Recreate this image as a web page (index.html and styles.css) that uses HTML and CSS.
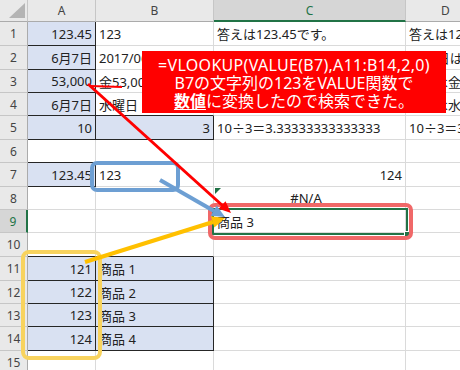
FILE: index.html
```html
<!DOCTYPE html>
<html lang="ja">
<head>
<meta charset="utf-8">
<title>VLOOKUP VALUE</title>
<link rel="stylesheet" href="styles.css">
</head>
<body>
<div class="sheet">
  <div class="grid">
    <div class="corner"><svg width="28" height="22" viewBox="0 0 28 22"><polygon points="9,18 25,18 25,3" fill="#b4b4b4"/></svg></div>
    <div class="ch">A</div><div class="ch">B</div><div class="ch on">C</div><div class="ch">D</div>

    <div class="rh">1</div><div class="c bx r">123.45</div><div class="c">123</div><div class="c">答えは123.45です。</div><div class="c">答えは123です。</div>
    <div class="rh">2</div><div class="c bx r">6月7日</div><div class="c">2017/06/07</div><div class="c"></div><div class="c">6月7日は</div>
    <div class="rh">3</div><div class="c bx r">53,000</div><div class="c">金53,000円</div><div class="c"></div><div class="c">答えは金53,000円</div>
    <div class="rh">4</div><div class="c bx r">6月7日</div><div class="c bb">水曜日</div><div class="c"></div><div class="c">答えは水曜日</div>
    <div class="rh">5</div><div class="c bx r">10</div><div class="c bx r">3</div><div class="c">10<span class="cjk">÷</span>3＝3.33333333333333</div><div class="c">10<span class="cjk">÷</span>3＝3.33333333333333</div>
    <div class="rh">6</div><div class="c bb"></div><div class="c"></div><div class="c"></div><div class="c"></div>
    <div class="rh">7</div><div class="c bx r">123.45</div><div class="c">123</div><div class="c r">124</div><div class="c"></div>
    <div class="rh">8</div><div class="c"></div><div class="c"></div><div class="c ctr na">#N/A</div><div class="c"></div>
    <div class="rh on">9</div><div class="c"></div><div class="c"></div><div class="c">商品 3</div><div class="c"></div>
    <div class="rh">10</div><div class="c bb"></div><div class="c bb"></div><div class="c"></div><div class="c"></div>
    <div class="rh">11</div><div class="c bx r">121</div><div class="c bx">商品 1</div><div class="c"></div><div class="c"></div>
    <div class="rh">12</div><div class="c bx r">122</div><div class="c bx">商品 2</div><div class="c"></div><div class="c"></div>
    <div class="rh">13</div><div class="c bx r">123</div><div class="c bx">商品 3</div><div class="c"></div><div class="c"></div>
    <div class="rh">14</div><div class="c bx r">124</div><div class="c bx">商品 4</div><div class="c"></div><div class="c"></div>
    <div class="rh">15</div><div class="c"></div><div class="c"></div><div class="c"></div><div class="c"></div>
  </div>

  <div class="sel"><span class="handle"></span></div>

  <div class="callout">
    <div class="l1">=VLOOKUP(VALUE(B7),A11:B14,2,0)</div>
    <div>B7の文字列の123をVALUE関数で</div>
    <div><b class="em">数値</b>に変換したので検索できた。</div>
  </div>

  <svg class="marks" width="460" height="370" viewBox="0 0 460 370">
    <polygon points="215,188 221,188 215,194" fill="#1e7145"/>
    <rect x="92" y="163" width="86" height="27" rx="5" fill="none" stroke="#6d9fd3" stroke-width="4"/>
    <rect x="210" y="205" width="201" height="33" rx="5" fill="none" stroke="#f06868" stroke-width="4"/>
    <rect x="23" y="252" width="77" height="106" rx="6" fill="none" stroke="#f8d35e" stroke-width="4"/>
    <line x1="90" y1="86" x2="122" y2="87" stroke="#ff0000" stroke-width="2"/>
    <line x1="88" y1="84" x2="223" y2="206" stroke="#ff0000" stroke-width="3"/>
    <polygon points="231,213 218.7,208.7 225.5,201.3" fill="#ff0000"/>
    <line x1="160" y1="180" x2="214" y2="211" stroke="#6d9fd3" stroke-width="4"/>
    <polygon points="225,217 210.7,215.8 216.7,205.4" fill="#6d9fd3"/>
    <line x1="85" y1="262" x2="213" y2="222" stroke="#ffc000" stroke-width="4"/>
    <polygon points="225,218 214.4,227.6 210.8,216.2" fill="#ffc000"/>
  </svg>
</div>
</body>
</html>
```

FILE: styles.css
```css
html, body {
  margin: 0;
  padding: 0;
  background: #ffffff;
}

.sheet {
  position: relative;
  width: 460px;
  height: 370px;
  overflow: hidden;
  font-family: "Noto Sans", "Noto Sans CJK JP", sans-serif;
}

.grid {
  display: grid;
  grid-template-columns: 28px 68px 118px 192px 80px;
  grid-template-rows: 22px 24px 24px 23px 23px 24px 23px 24px 23px 23px 24px 24px 23px 23px 24px 23px;
}

.corner {
  background: #e9e9e9;
  border-right: 1px solid #c6c6c6;
  border-bottom: 1px solid #ababab;
  box-sizing: border-box;
  overflow: hidden;
}

.corner svg {
  display: block;
}

.ch, .rh {
  box-sizing: border-box;
  display: flex;
  align-items: center;
  justify-content: center;
  background: #e9e9e9;
  color: #444444;
  font-size: 12px;
}

.ch {
  border-right: 1px solid #c6c6c6;
  border-bottom: 1px solid #ababab;
}

.rh {
  border-right: 1px solid #ababab;
  border-bottom: 1px solid #c6c6c6;
}

.ch.on {
  background: #d6d6d6;
  color: #217346;
  border-bottom: 2px solid #217346;
}

.rh.on {
  background: #d6d6d6;
  color: #217346;
  border-right: 2px solid #217346;
}

.c {
  box-sizing: border-box;
  display: flex;
  align-items: center;
  padding: 0 3px;
  border-right: 1px solid #dadada;
  border-bottom: 1px solid #dadada;
  overflow: hidden;
  white-space: nowrap;
  font-size: 13px;
  color: #222222;
}

.c.r {
  justify-content: flex-end;
}

.c.ctr {
  justify-content: center;
}

.c.na {
  padding-right: 10px;
}

.c.bx {
  background: #d9e1f2;
  border-right-color: #262626;
  border-bottom-color: #262626;
}

.c.bb {
  border-bottom-color: #262626;
}

.cjk {
  font-family: "Noto Sans CJK JP", sans-serif;
}

.sel {
  position: absolute;
  left: 212px;
  top: 208px;
  width: 192px;
  height: 23px;
  border: 2px solid #217346;
}

.handle {
  position: absolute;
  right: -5px;
  bottom: -5px;
  width: 5px;
  height: 5px;
  background: #217346;
  border: 1px solid #ffffff;
}

.marks {
  position: absolute;
  left: 0;
  top: 0;
}

.callout {
  position: absolute;
  left: 142px;
  top: 51px;
  width: 304px;
  height: 62px;
  box-sizing: border-box;
  padding-top: 2px;
  background: #ff0000;
  color: #ffffff;
  font-family: "Noto Sans", "Noto Sans CJK JP", sans-serif;
  font-size: 16px;
  line-height: 18px;
  text-align: center;
  display: flex;
  flex-direction: column;
  justify-content: center;
}

.callout .l1 {
  letter-spacing: 0.3px;
}

.callout .em {
  font-weight: bold;
  text-decoration: underline;
  text-underline-offset: 2px;
}
```
